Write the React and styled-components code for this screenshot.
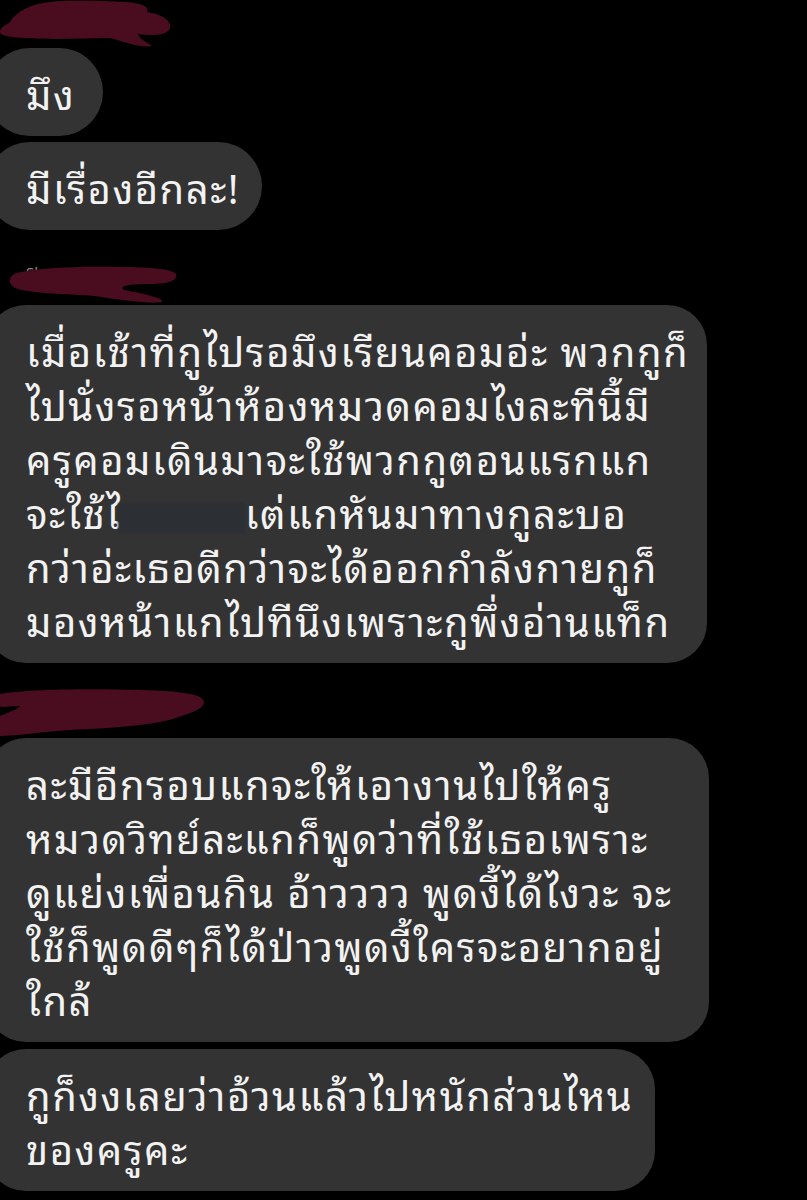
import React from 'react';
import styled, { createGlobalStyle } from 'styled-components';

const GlobalStyle = createGlobalStyle`
    html, body {
        margin: 0;
        padding: 0;
        background: #000;
    }
    body {
        font-family: "Noto Sans Thai Looped", "Loma", "Garuda", "Tlwg Typo", "Noto Sans", "Noto Sans Thai", sans-serif;
        color: #f2f2f2;
    }
`;

const Style = {
    Page: styled.div`
        width: 807px;
        height: 1200px;
        background: #000;
        overflow: hidden;
        display: flex;
        flex-direction: column;
    `,
    Sender: styled.div`
        position: relative;
        height: ${(p) => p.height}px;
        flex-shrink: 0;
    `,
    Name: styled.span`
        position: absolute;
        left: 26px;
        bottom: 22px;
        font-size: 15px;
        color: #8a8a8a;
    `,
    Scribble: styled.svg`
        position: absolute;
        left: 0;
        bottom: 0;
    `,
    Group: styled.div`
        display: flex;
        flex-direction: column;
        align-items: flex-start;
        gap: ${(p) => p.gap || 6}px;
    `,
    Bubble: styled.div`
        margin-left: -14px;
        padding: 17px ${(p) => p.padRight || 32}px 17px 40px;
        background: #333333;
        border-radius: ${(p) => (p.pill ? 44 : 40)}px;
        font-size: 40px;
        line-height: 54px;
        letter-spacing: 1.5px;
        white-space: nowrap;
    `,
    Line: styled.div`
        display: block;
    `,
    Hidden: styled.span`
        display: inline-block;
        width: 127px;
        height: 30px;
        margin-left: -4px;
        vertical-align: -4px;
        background: #2c2f34;
        filter: blur(1px);
    `,
};

const scribbleTop = (
    <Style.Scribble width="180" height="50" viewBox="0 0 180 50">
        <path
            d="M10 24 C16 14 30 6 50 4 C70 2 100 3 125 4 C140 5 150 8 147 14 C160 16 172 22 170 30 C168 38 150 38 138 36 C140 42 150 46 152 48 C140 50 125 44 110 40 C85 40 55 42 30 40 C14 40 0 38 0 34 C0 30 4 28 10 24 Z"
            fill="#4a0d1f"
        />
    </Style.Scribble>
);

const scribbleMid = (
    <Style.Scribble width="190" height="45" viewBox="0 0 190 45">
        <path
            d="M14 14 C30 8 80 6 120 7 C150 7 172 9 176 14 C178 20 170 24 150 24 C130 24 118 26 124 30 C140 33 165 38 162 42 C150 44 120 40 95 36 C70 34 40 34 22 30 C10 28 6 20 14 14 Z"
            fill="#4a0d1f"
        />
    </Style.Scribble>
);

const scribbleLow = (
    <Style.Scribble width="210" height="52" viewBox="0 0 210 52">
        <path
            d="M0 8 C20 4 80 2 140 4 C180 5 204 8 204 16 C204 24 186 28 176 32 C150 40 110 42 70 44 C40 46 15 50 0 50 L0 30 C10 26 20 22 20 20 C10 20 0 22 0 20 Z"
            fill="#4a0d1f"
        />
    </Style.Scribble>
);

const Bubble = ({ lines, pill, padRight }) => (
    <Style.Bubble pill={pill} padRight={padRight}>
        {lines.map((line, i) => (
            <Style.Line key={i}>{line}</Style.Line>
        ))}
    </Style.Bubble>
);

const App = () => {
    return (
        <>
            <GlobalStyle />
            <Style.Page>
                <Style.Sender height={48}>{scribbleTop}</Style.Sender>
                <Style.Group>
                    <Bubble pill padRight={28} lines={['มึง']} />
                    <Bubble pill padRight={22} lines={['มีเรื่องอีกละ!']} />
                </Style.Group>
                <Style.Sender height={75}>
                    <Style.Name>Sh</Style.Name>
                    {scribbleMid}
                </Style.Sender>
                <Style.Group>
                    <Bubble
                        padRight={18}
                        lines={[
                            'เมื่อเช้าที่กูไปรอมึงเรียนคอมอ่ะ พวกกูก็',
                            'ไปนั่งรอหน้าห้องหมวดคอมไงละทีนี้มี',
                            'ครูคอมเดินมาจะใช้พวกกูตอนแรกแก',
                            <>
                                จะใช้ไ<Style.Hidden />เต่แกหันมาทางกูละบอ
                            </>,
                            'กว่าอ่ะเธอดีกว่าจะได้ออกกำลังกายกูก็',
                            'มองหน้าแกไปทีนึงเพราะกูพึ่งอ่านแท็ก',
                        ]}
                    />
                </Style.Group>
                <Style.Sender height={75}>{scribbleLow}</Style.Sender>
                <Style.Group gap={7}>
                    <Bubble
                        padRight={36}
                        lines={[
                            'ละมีอีกรอบแกจะให้เอางานไปให้ครู',
                            'หมวดวิทย์ละแกก็พูดว่าที่ใช้เธอเพราะ',
                            'ดูแย่งเพื่อนกิน อ้าวววว พูดงี้ได้ไงวะ จะ',
                            'ใช้ก็พูดดีๆก็ได้ป่าวพูดงี้ใครจะอยากอยู่',
                            'ใกล้',
                        ]}
                    />
                    <Bubble padRight={22} lines={['กูก็งงเลยว่าอ้วนแล้วไปหนักส่วนไหน', 'ของครูคะ']} />
                </Style.Group>
            </Style.Page>
        </>
    );
};

export default App;
